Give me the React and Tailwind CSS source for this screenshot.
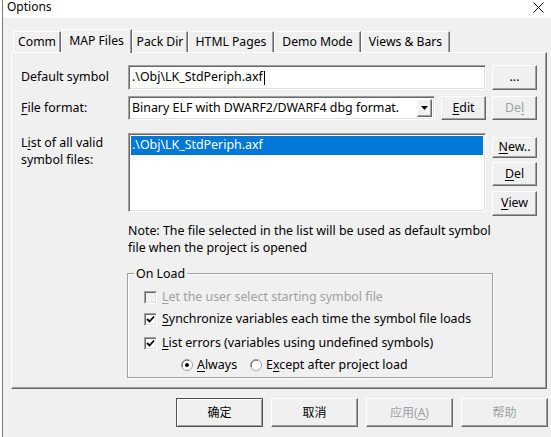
import React from "react";

const Raised = ({ className = "", children, def = false }) => (
  <div
    className={
      "box-border flex items-center justify-center " +
      (def
        ? "border border-[#505050] shadow-[inset_1px_1px_0_#fff,inset_-1px_-1px_0_#a0a0a0] "
        : "border-t border-l border-b border-r border-t-white border-l-white border-b-[#696969] border-r-[#696969] shadow-[inset_-1px_-1px_0_#a0a0a0] ") +
      "bg-[#f0f0f0] " +
      className
    }
  >
    {children}
  </div>
);

const Sunken = ({ className = "", children }) => (
  <div
    className={
      "box-border border-t border-l border-b border-r border-t-[#a0a0a0] border-l-[#a0a0a0] border-b-white border-r-white shadow-[inset_1px_1px_0_#696969,inset_-1px_-1px_0_#e3e3e3] " +
      className
    }
  >
    {children}
  </div>
);

const CheckBox = ({ checked, disabled }) => (
  <div className="w-[13px] h-[13px] box-border border-t border-l border-b border-r border-t-[#a0a0a0] border-l-[#a0a0a0] border-b-white border-r-white shrink-0">
    <div
      className={
        "w-full h-full box-border border-t border-l border-b border-r border-t-[#696969] border-l-[#696969] border-b-[#e3e3e3] border-r-[#e3e3e3] flex items-center justify-center " +
        (disabled ? "bg-[#f0f0f0]" : "bg-white")
      }
    >
      {checked && (
        <svg width="9" height="9" viewBox="0 0 9 9">
          <path d="M1 4 L3.5 6.5 L8 1.5" stroke="#000" strokeWidth="1.8" fill="none" />
        </svg>
      )}
    </div>
  </div>
);

const Radio = ({ checked }) => (
  <svg width="12" height="12" viewBox="0 0 12 12" className="shrink-0">
    <circle cx="6" cy="6" r="5.5" fill="#fff" stroke="#a0a0a0" />
    <path d="M1.5 8 A5 5 0 0 1 8 1.5" stroke="#696969" fill="none" strokeWidth="1" />
    {checked && <circle cx="6" cy="6" r="2" fill="#000" />}
  </svg>
);

const Tab = ({ children, w, selected }) =>
  selected ? (
    <div
      className={
        "h-[24px] box-border border-t border-l border-r border-t-white border-l-white border-r-[#696969] shadow-[inset_-1px_0_0_#a0a0a0] bg-[#f0f0f0] flex justify-center pt-[2px] relative z-10 -mb-[1px] whitespace-nowrap " +
        w
      }
    >
      {children}
    </div>
  ) : (
    <div
      className={
        "h-[21px] box-border border-t border-l border-r border-t-white border-l-white border-r-[#696969] shadow-[inset_-1px_0_0_#a0a0a0] bg-[#f0f0f0] flex justify-center pt-[1px] whitespace-nowrap " +
        w
      }
    >
      {children}
    </div>
  );

export default function App() {
  return (
    <div className="w-[551px] h-[437px] bg-white pl-[2px] overflow-hidden text-[12.4px] text-black font-['Noto_Sans','Noto_Sans_CJK_SC',sans-serif]">
      <div className="h-full border-l border-[#7a7a7a] bg-[#f0f0f0] flex flex-col">
        {/* title bar */}
        <div className="h-[18px] bg-white flex items-start justify-between shrink-0">
          <div className="pl-[4px] leading-[14px] text-[12px]">Options</div>
          <svg width="11" height="11" viewBox="0 0 11 11" className="mt-[2px] mr-[7px]">
            <path d="M0.5 0.5 L10.5 10.5 M10.5 0.5 L0.5 10.5" stroke="#111" strokeWidth="1" />
          </svg>
        </div>

        <div className="pl-[8px] pt-[10px]">
          {/* tabs */}
          <div className="flex items-end h-[24px] pl-[2px] leading-[18px] text-[12.2px]">
            <Tab w="w-[48px]">Comm</Tab>
            <Tab w="w-[71px]" selected>
              MAP Files
            </Tab>
            <Tab w="w-[56px]">Pack Dir</Tab>
            <Tab w="w-[86px]">HTML Pages</Tab>
            <Tab w="w-[87px]">Demo Mode</Tab>
            <Tab w="w-[89px]">Views &amp; Bars</Tab>
          </div>

          {/* panel */}
          <div className="w-[536px] h-[337px] box-border border-t border-l border-b border-r border-t-white border-l-white border-b-[#696969] border-r-[#696969] shadow-[inset_-1px_-1px_0_#a0a0a0] pl-[9px] pt-[12px]">
            {/* row 1 */}
            <div className="flex items-center h-[25px]">
              <div className="w-[107px]">Default symbol</div>
              <Sunken className="w-[358px] h-[25px] bg-white flex items-center pl-[3px]">
                <span>.\Obj\LK_StdPeriph.axf</span>
                <span className="w-px h-[14px] bg-black ml-[1px]" />
              </Sunken>
              <Raised className="w-[45px] h-[25px] ml-[6px]">
                <span className="mt-[-1px]">...</span>
              </Raised>
            </div>

            {/* row 2 */}
            <div className="flex items-center h-[24px] mt-[6px]">
              <div className="w-[107px]">
                <u className="underline-offset-2">F</u>ile format:
              </div>
              <Sunken className="w-[307px] h-[24px] bg-white flex items-center justify-between pl-[3px] pr-[2px]">
                <span className="whitespace-nowrap">Binary ELF with DWARF2/DWARF4 dbg format.</span>
                <Raised className="w-[15px] h-[18px]">
                  <svg width="7" height="4" viewBox="0 0 7 4">
                    <path d="M0 0 L7 0 L3.5 4 Z" fill="#000" />
                  </svg>
                </Raised>
              </Sunken>
              <Raised className="w-[45px] h-[24px] ml-[6px]">
                <span>
                  <u className="underline-offset-2">E</u>dit
                </span>
              </Raised>
              <Raised className="w-[45px] h-[24px] ml-[6px] text-[#a0a0a0]">
                <span>
                  De<u className="underline-offset-2">l</u>
                </span>
              </Raised>
            </div>

            {/* row 3 */}
            <div className="flex items-start mt-[13px]">
              <div className="w-[107px] leading-[17px] pt-[1px]">
                L<u className="underline-offset-2">i</u>st of all valid
                <br />
                symbol files:
              </div>
              <Sunken className="w-[358px] h-[79px] bg-white p-[2px]">
                <div className="h-[19px] bg-[#0078d7] text-white flex items-center pl-[1px]">.\Obj\LK_StdPeriph.axf</div>
              </Sunken>
              <div className="flex flex-col ml-[6px] pt-[4px]">
                <Raised className="w-[45px] h-[21px]">
                  <span>
                    <u className="underline-offset-2">N</u>ew..
                  </span>
                </Raised>
                <Raised className="w-[45px] h-[24px] mt-[4px]">
                  <span>
                    <u className="underline-offset-2">D</u>el
                  </span>
                </Raised>
                <Raised className="w-[45px] h-[25px] mt-[5px]">
                  <span>
                    <u className="underline-offset-2">V</u>iew
                  </span>
                </Raised>
              </div>
            </div>

            {/* note */}
            <div className="ml-[107px] mt-[6px] leading-[17px] whitespace-nowrap">
              Note: The file selected in the list will be used as default symbol
              <br />
              file when the project is opened
            </div>

            {/* group */}
            <div className="ml-[106px] mt-[17px] w-[366px] h-[105px] box-border border border-[#a0a0a0] shadow-[inset_1px_1px_0_#fff,1px_1px_0_#fff] relative pl-[16px] pt-[12px] whitespace-nowrap">
              <div className="absolute left-[6px] -top-[9px] px-[2px] bg-[#f0f0f0] leading-[17px]">On Load</div>
              <div className="flex items-center h-[22px] text-[#a0a0a0]">
                <CheckBox disabled />
                <span className="ml-[5px]">
                  <u className="underline-offset-2">L</u>et the user select starting symbol file
                </span>
              </div>
              <div className="flex items-center h-[22px]">
                <CheckBox checked />
                <span className="ml-[5px]">
                  <u className="underline-offset-2">S</u>ynchronize variables each time the symbol file loads
                </span>
              </div>
              <div className="flex items-center h-[22px] mt-[2px]">
                <CheckBox checked />
                <span className="ml-[5px]">
                  <u className="underline-offset-2">L</u>ist errors (variables using undefined symbols)
                </span>
              </div>
              <div className="flex items-center h-[22px] pl-[37px]">
                <Radio checked />
                <span className="ml-[4px]">
                  <u className="underline-offset-2">A</u>lways
                </span>
                <span className="ml-[13px] flex">
                  <Radio />
                </span>
                <span className="ml-[4px]">
                  E<u className="underline-offset-2">x</u>cept after project load
                </span>
              </div>
            </div>
          </div>
        </div>

        {/* bottom buttons */}
        <div className="flex mt-[9px] ml-[173px] gap-[8px] text-[12px]">
          <Raised def className="w-[87px] h-[29px]">确定</Raised>
          <Raised className="w-[87px] h-[29px]">取消</Raised>
          <Raised className="w-[87px] h-[29px] text-[#a0a0a0]">
            <span>
              应用(<u className="underline-offset-2">A</u>)
            </span>
          </Raised>
          <Raised className="w-[87px] h-[29px] text-[#a0a0a0]">帮助</Raised>
        </div>
      </div>
    </div>
  );
}
